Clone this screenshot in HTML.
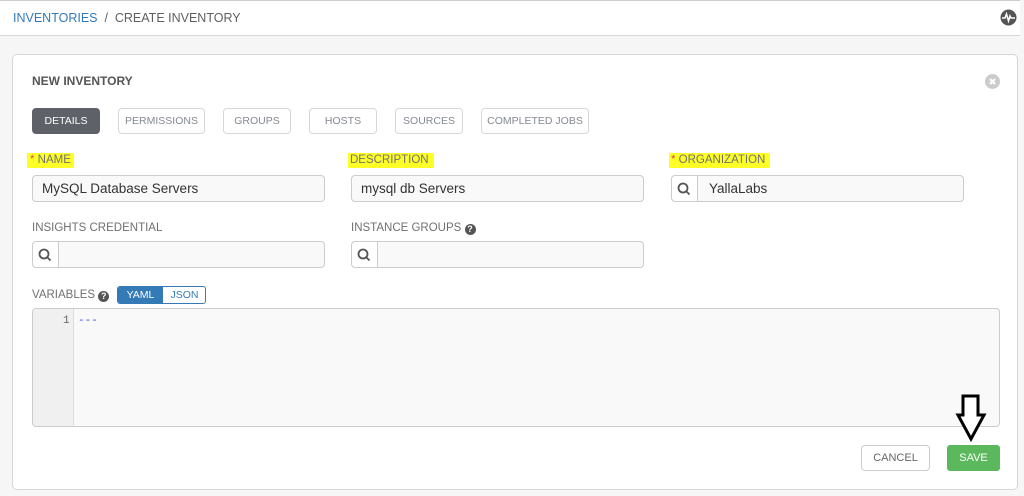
<!DOCTYPE html>
<html><head><meta charset="utf-8"><style>
*{box-sizing:border-box;margin:0;padding:0}
body{width:1024px;height:496px;background:#f6f6f6;font-family:"Liberation Sans",sans-serif;position:relative;overflow:hidden;color:#707070}
.a{position:absolute}
.top{left:0;top:0;width:1020px;height:36px;background:#fff;border-bottom:1px solid #d7d7d7;border-top:1px solid #ccc}
.bc{left:13px;top:11px;font-size:12.5px;color:#5f5f5f}
.bc .l{color:#337ab7}
.card{left:12px;top:54px;width:1006px;height:436px;background:#fff;border:1px solid #d7d7d7;border-radius:5px}
.title{left:32px;top:74px;font-size:12px;font-weight:bold;color:#555}
.tab{top:108px;height:26px;border:1px solid #d7d7d7;border-radius:4px;font-size:10.5px;color:#848992;text-align:center;line-height:24px;background:#fff}
.lbl{font-size:11.5px;color:#707070}
.hl{background:#ffff28}
.star{color:#d9534f}
.inp{height:27px;border:1px solid #ccc;border-radius:4px;background:#f9f9f9;font-size:13.5px;color:#333;line-height:25px;padding-left:9px}
.srch{height:27px;border:1px solid #ccc;border-radius:4px;background:#f9f9f9}
.srch .ic{position:absolute;left:0;top:0;width:26px;height:25px;background:#fff;border-right:1px solid #ccc;border-radius:4px 0 0 4px}
.q{display:inline-block;width:11px;height:11px;border-radius:50%;background:#555;color:#fff;font-size:9px;font-weight:bold;text-align:center;line-height:11px;vertical-align:-1px}
</style></head><body>
<div class="a top"></div>
<div class="a bc"><span class="l">INVENTORIES</span> &nbsp;/&nbsp; CREATE INVENTORY</div>
<svg class="a" style="left:1000px;top:9px" width="17" height="17" viewBox="0 0 17 17"><circle cx="8.5" cy="8.5" r="8" fill="#555"/><path d="M2 9h3l1.5-4 2 7 1.5-5 1 2h4" stroke="#fff" stroke-width="1.5" fill="none"/></svg>
<div class="a card"></div>
<div class="a title">NEW INVENTORY</div>
<svg class="a" style="left:985px;top:74px" width="15" height="15" viewBox="0 0 15 15"><circle cx="7.5" cy="7.5" r="7.5" fill="#ccc"/><path d="M5 5l5 5M10 5l-5 5" stroke="#fff" stroke-width="2"/></svg>
<div class="a tab" style="left:32px;width:68px;background:#5e6168;border-color:#5e6168;color:#fff">DETAILS</div>
<div class="a tab" style="left:118px;width:87px">PERMISSIONS</div>
<div class="a tab" style="left:223px;width:68px">GROUPS</div>
<div class="a tab" style="left:309px;width:68px">HOSTS</div>
<div class="a tab" style="left:395px;width:68px">SOURCES</div>
<div class="a tab" style="left:481px;width:108px">COMPLETED JOBS</div>

<div class="a lbl hl" style="left:27px;top:153px;padding:1px 3px 2px"><span class="star">*</span> NAME</div>
<div class="a lbl hl" style="left:348px;top:153px;padding:1px 5px 2px 2px">DESCRIPTION</div>
<div class="a lbl hl" style="left:669px;top:153px;padding:1px 5px 2px 2px"><span class="star">*</span> ORGANIZATION</div>
<div class="a inp" style="left:32px;top:175px;width:293px">MySQL Database Servers</div>
<div class="a inp" style="left:351px;top:175px;width:293px">mysql db Servers</div>
<div class="a srch" style="left:671px;top:175px;width:293px"><div class="ic"></div><span class="a" style="left:37px;top:0;font-size:13.5px;color:#333;line-height:25px">YallaLabs</span></div>

<div class="a lbl" style="left:32px;top:222px">INSIGHTS CREDENTIAL</div>
<div class="a lbl" style="left:351px;top:222px">INSTANCE GROUPS <span class="q">?</span></div>
<div class="a srch" style="left:32px;top:241px;width:293px"><div class="ic"></div></div>
<div class="a srch" style="left:351px;top:241px;width:293px"><div class="ic"></div></div>

<div class="a lbl" style="left:32px;top:289px">VARIABLES <span class="q">?</span></div>
<div class="a" style="left:117px;top:286px;width:89px;height:18px;border:1px solid #337ab7;border-radius:3px;font-size:10.5px;line-height:16px;overflow:hidden;background:#fff">
<span class="a" style="left:0;top:0;width:45px;height:16px;background:#337ab7;color:#fff;text-align:center">YAML</span>
<span class="a" style="left:45px;top:0;width:43px;color:#337ab7;text-align:center">JSON</span></div>
<div class="a" style="left:32px;top:308px;width:968px;height:119px;border:1px solid #ccc;border-radius:4px;background:#f9f9f9;overflow:hidden">
<div class="a" style="left:0;top:0;width:41px;height:119px;background:#f0f0f0;border-right:1px solid #ddd"></div>
<span class="a" style="left:30px;top:6px;font-size:11px;color:#666;font-family:'Liberation Mono',monospace">1</span>
<span class="a" style="left:45px;top:6px;font-size:11px;color:#44f;font-family:'Liberation Mono',monospace">---</span></div>

<div class="a" style="left:861px;top:445px;width:69px;height:26px;border:1px solid #ccc;border-radius:4px;background:#fff;font-size:11px;text-align:center;line-height:24px;color:#666">CANCEL</div>
<div class="a" style="left:947px;top:445px;width:53px;height:26px;border-radius:3px;background:#5cb85c;font-size:11px;text-align:center;line-height:26px;color:#fff">SAVE</div>

<svg class="a" style="left:0;top:0;pointer-events:none" width="1024" height="496">
<path d="M963 396h15v19h6l-13 24-13-24h5z" fill="#fff" stroke="#000" stroke-width="3" stroke-linejoin="miter"/>
<g fill="none" stroke="#555" stroke-width="1.8">
<circle cx="683" cy="188" r="4.5"/><path d="M686.5 191.5l3 3"/>
<circle cx="44" cy="254" r="4.5"/><path d="M47.5 257.5l3 3"/>
<circle cx="363" cy="254" r="4.5"/><path d="M366.5 257.5l3 3"/>
</g>
</svg>
</body></html>
